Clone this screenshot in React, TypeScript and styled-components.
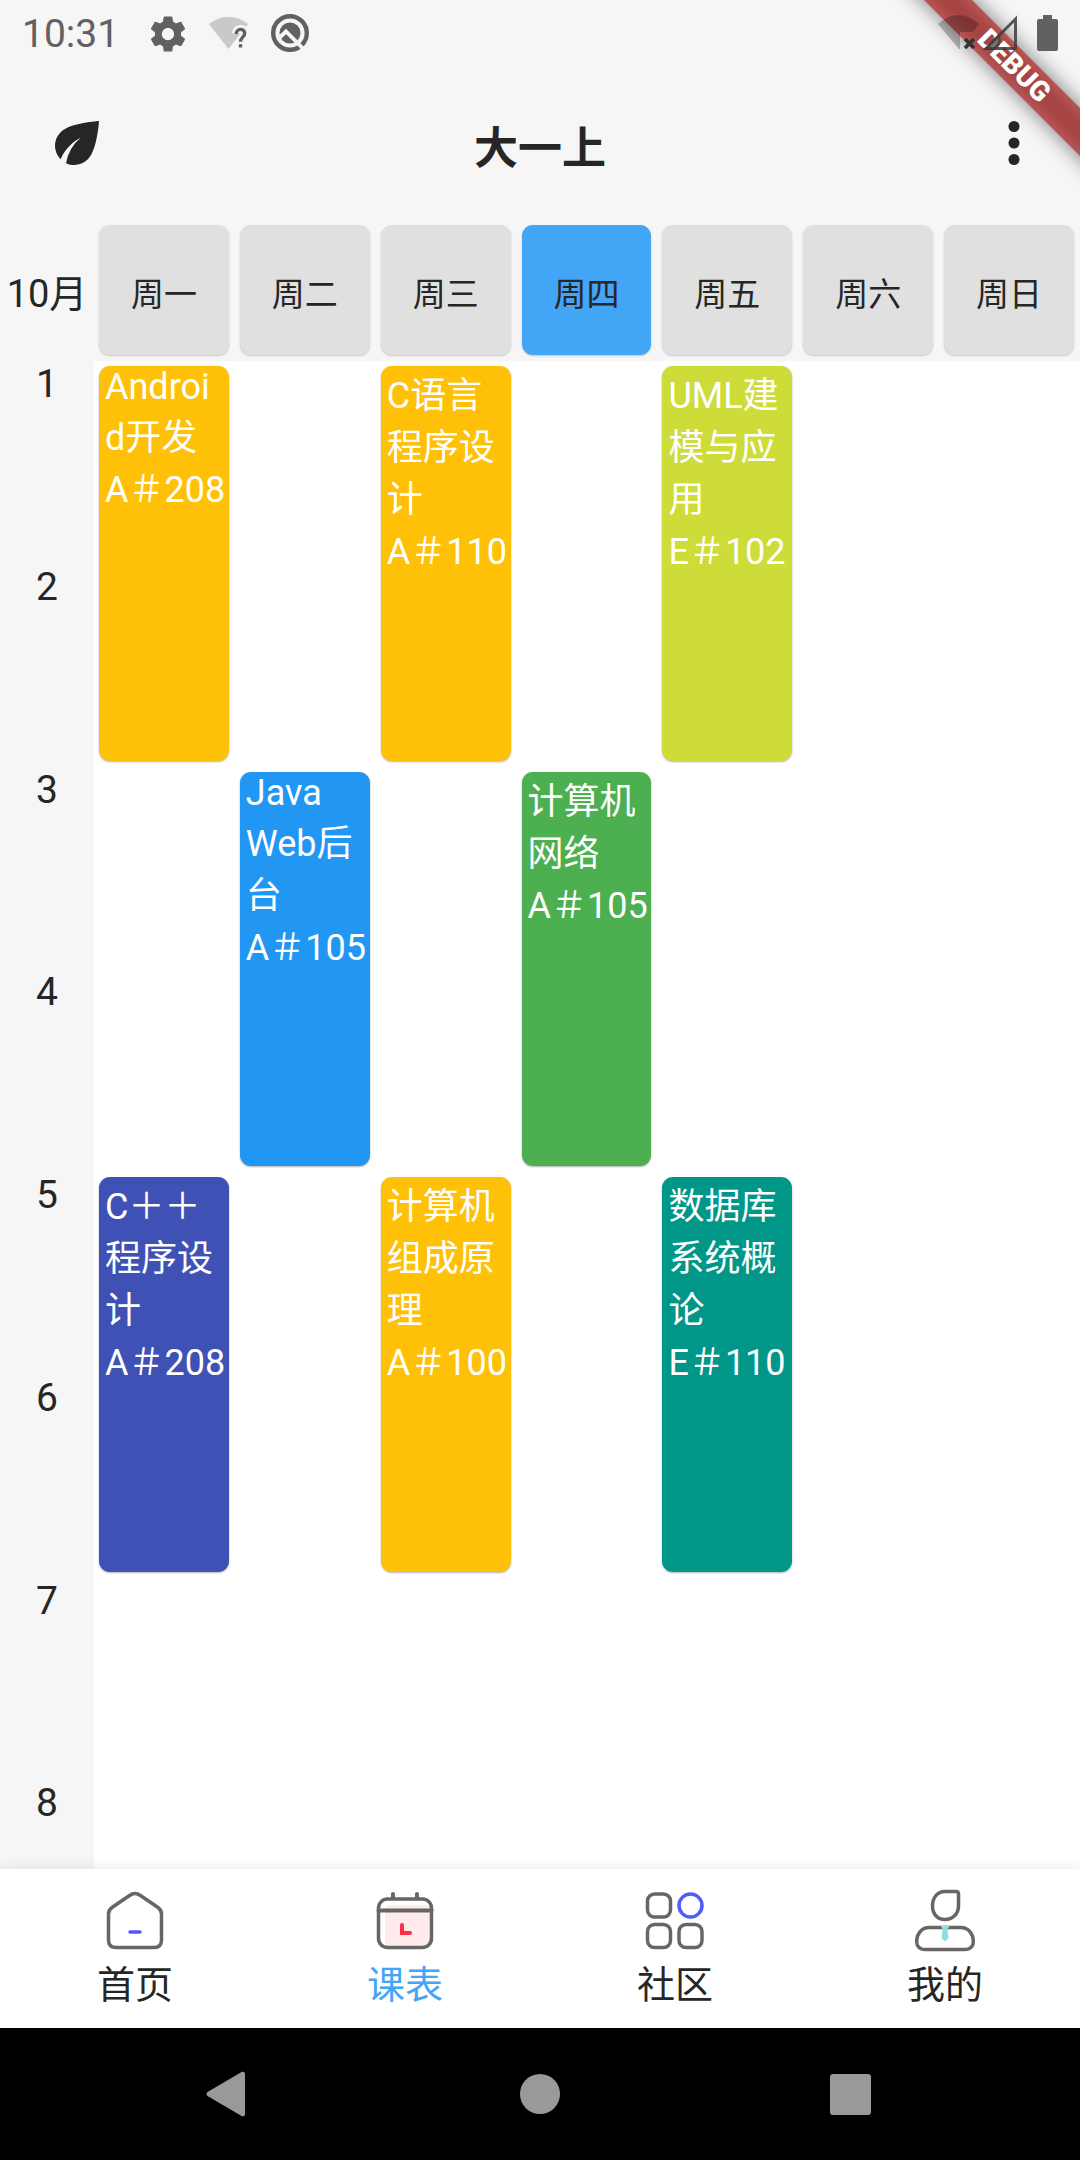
import React from 'react';
import styled, { createGlobalStyle } from 'styled-components';

const GlobalStyle = createGlobalStyle`
  * { box-sizing: border-box; }
  html, body, #root { height: 100%; margin: 0; }
  body {
    background: #f6f6f6;
    color: #262626;
    font-family: Roboto, "Noto Sans CJK SC", sans-serif;
    font-size: 39px;
  }
  button { font: inherit; color: inherit; background: none; border: 0; padding: 0; margin: 0; cursor: pointer; }
  svg { display: block; flex: none; }
`;

const Screen = styled.div`
  position: relative;
  display: flex;
  flex-direction: column;
  height: 100vh;
  overflow: hidden;
`;

const StatusBar = styled.div`
  position: relative;
  z-index: 2;
  display: flex;
  flex: none;
  align-items: center;
  justify-content: space-between;
  height: 66px;
  padding: 2px 20px 0 22px;
  color: #616161;
`;

const StatusGroup = styled.div<{ $gap: number }>`
  display: flex;
  align-items: center;
  gap: ${(p) => p.$gap}px;
`;

const Clock = styled.time`
  margin-right: 9px;
`;

const BannerCorner = styled.div`
  position: absolute;
  top: 0;
  right: 0;
  z-index: 1;
  width: 240px;
  height: 240px;
  overflow: hidden;
  pointer-events: none;
`;

const Banner = styled.div`
  position: absolute;
  top: 49px;
  right: -114px;
  width: 360px;
  height: 34px;
  transform: rotate(45deg);
  &::before {
    content: "";
    position: absolute;
    inset: 0;
    background: rgba(0, 0, 0, 0.5);
    filter: blur(11px);
  }
`;

const BannerText = styled.div`
  position: relative;
  background: rgba(183, 28, 28, 0.63);
  color: #fff;
  font-size: 28px;
  font-weight: 900;
  line-height: 34px;
  text-align: center;
`;

const AppBar = styled.header`
  display: grid;
  flex: none;
  grid-template-columns: 77px 1fr 77px;
  align-items: center;
  justify-items: end;
  height: 154px;
  padding: 0 33px;
`;

const Title = styled.h1`
  justify-self: center;
  margin: 0;
  padding-top: 4px;
  font-size: 44px;
  font-weight: 700;
`;

const WeekHeader = styled.div`
  display: grid;
  flex: none;
  grid-template-columns: 94px repeat(7, minmax(0, 1fr));
  height: 141px;
`;

const Month = styled.div`
  display: flex;
  align-items: center;
  justify-content: center;
  font-size: 38px;
`;

const Day = styled.div<{ $today: boolean }>`
  display: flex;
  align-items: center;
  justify-content: center;
  margin: 5px 6px 6px 5px;
  padding-top: 3px;
  border-radius: 11px;
  background: ${(p) => (p.$today ? '#42a5f5' : '#e0e0e0')};
  box-shadow: 0 1px 2px rgba(0, 0, 0, 0.2);
  font-size: 33px;
`;

const Timetable = styled.main`
  display: grid;
  flex: 1;
  grid-template-columns: 94px 1fr;
  grid-template-rows: 1622px;
  min-height: 0;
  overflow: hidden;
`;

const Periods = styled.ol`
  display: grid;
  grid-template-rows: repeat(8, 1fr);
  margin: 0;
  padding: 0;
  list-style: none;
  text-align: center;
`;

const Lessons = styled.div`
  display: grid;
  grid-template-columns: repeat(7, minmax(0, 1fr));
  grid-template-rows: repeat(8, 1fr);
  background: #fff;
`;

const Lesson = styled.article<{ $day: number; $start: number; $color: string }>`
  grid-column: ${(p) => p.$day};
  grid-row: ${(p) => p.$start} / span 2;
  margin: 5px 6px 6px 5px;
  padding: 0 4px 0 6px;
  border-radius: 11px;
  background: ${(p) => p.$color};
  box-shadow: 0 1px 2px rgba(0, 0, 0, 0.3);
  color: #fff;
  font-size: 36px;
  overflow-wrap: anywhere;
`;

const LessonName = styled.div``;

const Room = styled.div`
  white-space: nowrap;
`;

const TabBar = styled.nav`
  position: relative;
  display: grid;
  flex: none;
  grid-template-columns: repeat(4, 1fr);
  height: 159px;
  background: #fff;
  box-shadow: 0 0 14px rgba(0, 0, 0, 0.1);
`;

const Tab = styled.button<{ $active: boolean }>`
  display: flex;
  flex-direction: column;
  align-items: center;
  padding-top: 19px;
  color: ${(p) => (p.$active ? '#42a5f5' : '#262626')};
  font-size: 38px;
  line-height: 62px;
`;

const SystemBar = styled.div`
  display: flex;
  flex: none;
  align-items: center;
  justify-content: center;
  gap: 244px;
  height: 132px;
  background: #000;
`;

const days = ['周一', '周二', '周三', '周四', '周五', '周六', '周日'];

const lessons = [
  { day: 1, start: 1, name: 'Android开发', room: 'A＃208', color: '#ffc107' },
  { day: 3, start: 1, name: 'C语言程序设计', room: 'A＃110', color: '#ffc107' },
  { day: 5, start: 1, name: 'UML建模与应用', room: 'E＃102', color: '#cddc39' },
  { day: 2, start: 3, name: 'Java Web后台', room: 'A＃105', color: '#2196f3' },
  { day: 4, start: 3, name: '计算机网络', room: 'A＃105', color: '#4caf50' },
  { day: 1, start: 5, name: 'C＋＋程序设计', room: 'A＃208', color: '#3f51b5' },
  { day: 3, start: 5, name: '计算机组成原理', room: 'A＃100', color: '#ffc107' },
  { day: 5, start: 5, name: '数据库系统概论', room: 'E＃110', color: '#009688' },
];

const GearIcon = () => (
  <svg width="42" height="42" viewBox="0 0 24 24" fill="currentColor">
    <path d="M19.43 12.98c.04-.32.07-.64.07-.98s-.03-.66-.07-.98l2.11-1.65c.19-.15.24-.42.12-.64l-2-3.46c-.12-.22-.39-.3-.61-.22l-2.49 1c-.52-.4-1.08-.73-1.69-.98l-.38-2.65C14.46 2.18 14.25 2 14 2h-4c-.25 0-.46.18-.49.42l-.38 2.65c-.61.25-1.17.59-1.69.98l-2.49-1c-.23-.09-.49 0-.61.22l-2 3.46c-.13.22-.07.49.12.64l2.11 1.65c-.04.32-.07.65-.07.98s.03.66.07.98l-2.11 1.65c-.19.15-.24.42-.12.64l2 3.46c.12.22.39.3.61.22l2.49-1c.52.4 1.08.73 1.69.98l.38 2.65c.03.24.24.42.49.42h4c.25 0 .46-.18.49-.42l.38-2.65c.61-.25 1.17-.59 1.69-.98l2.49 1c.23.09.49 0 .61-.22l2-3.46c.12-.22.07-.49-.12-.64l-2.11-1.65zM12 15.5c-1.93 0-3.5-1.57-3.5-3.5s1.57-3.5 3.5-3.5 3.5 1.57 3.5 3.5-1.57 3.5-3.5 3.5z" />
  </svg>
);

const WifiUnknownIcon = () => (
  <svg width="42" height="42" viewBox="0 0 42 42" fill="none">
    <path d="M1 11Q20.500 -3.500 40 11L20.500 36Z" fill="#c9c9c9" />
    <path d="M28 20.500C28 14.500 37 14.500 37 20C37 24.500 32.500 24 32.500 29V34" stroke="#f6f6f6" strokeWidth="8" />
    <path d="M28.300 21C28.300 15 36.700 15 36.700 20.300C36.700 24.300 32.500 24 32.500 28.800M32.500 31.200V34.600" stroke="#616161" strokeWidth="3.400" />
  </svg>
);

const SearchRingIcon = () => (
  <svg width="42" height="42" viewBox="0 0 42 42" fill="none">
    <circle cx="21" cy="20" r="16.800" stroke="#616161" strokeWidth="4.400" />
    <circle cx="21" cy="20" r="10.500" fill="#616161" />
    <path d="M8.500 26.500L17 18.500L37 38.500" stroke="#f6f6f6" strokeWidth="3.800" />
  </svg>
);

const WifiOffIcon = () => (
  <svg width="42" height="42" viewBox="0 0 42 42" fill="none">
    <path d="M1 11Q21 -7 42 11L36 19H23V36H22Z" fill="#000" fillOpacity="0.24" />
    <path d="M28 26L37 35M37 26L28 35" stroke="#363030" strokeWidth="3.600" />
  </svg>
);

const SignalIcon = () => (
  <svg width="51" height="42" viewBox="0 0 51 42" fill="none">
    <path d="M5 35.500L34.500 6V35.500Z" stroke="#3c3c3c" strokeOpacity="0.85" strokeWidth="3" />
    <path d="M2 37L18 21Q23 31 14 37Z" fill="#3c3c3c" fillOpacity="0.7" />
  </svg>
);

const BatteryIcon = () => (
  <svg width="26" height="42" viewBox="0 0 26 42" fill="#616161">
    <path d="M9 2h9v4h4q2 0 2 2v28q0 2-2 2H5q-2 0-2-2V8q0-2 2-2h4z" />
  </svg>
);

const LeafIcon = () => (
  <svg width="66" height="66" viewBox="0 0 24 24" fill="currentColor">
    <path d="M6.050 8.050a7.001 7.001 0 0 0-.02 9.880c1.470-3.400 4.090-6.240 7.360-7.930A15.952 15.952 0 0 0 8 19.320c2.600 1.230 5.800.78 7.950-1.370C19.430 14.470 20 4 20 4S9.530 4.570 6.050 8.050z" />
  </svg>
);

const MoreIcon = () => (
  <svg width="66" height="66" viewBox="0 0 24 24" fill="currentColor">
    <circle cx="12" cy="6" r="2" />
    <circle cx="12" cy="12" r="2" />
    <circle cx="12" cy="18" r="2" />
  </svg>
);

const HomeIcon = () => (
  <svg width="66" height="66" viewBox="0 0 66 66" fill="none" strokeWidth="3.500">
    <path d="M27.500 7.500Q33 3.500 38.500 7.500L56 19.500Q59.500 22 59.500 26V52Q59.500 59.500 52 59.500H14Q6.500 59.500 6.500 52V26Q6.500 22 10 19.500Z" stroke="#666" />
    <path d="M28 44H38" stroke="#4f5bff" strokeLinecap="round" />
  </svg>
);

const CalendarIcon = () => (
  <svg width="66" height="66" viewBox="0 0 66 66" fill="none" strokeWidth="3.500">
    <rect x="13" y="17" width="46" height="42" rx="5" fill="#ffebec" />
    <rect x="6.500" y="11" width="53" height="48.500" rx="9" stroke="#666" />
    <path d="M6.500 22.500H59.500M21 10V6M45 10V6" stroke="#666" strokeWidth="4" strokeLinecap="round" />
    <path d="M30 37V45H38" stroke="#ff3045" strokeWidth="4" strokeLinecap="round" />
  </svg>
);

const CommunityIcon = () => (
  <svg width="66" height="66" viewBox="0 0 66 66" fill="none" stroke="#666" strokeWidth="3.500">
    <rect x="5.500" y="6" width="23" height="23" rx="7" />
    <circle cx="48.500" cy="17.500" r="11.500" stroke="#4f5bff" />
    <rect x="5.500" y="36.500" width="23" height="23" rx="7" />
    <rect x="37" y="36.500" width="23" height="23" rx="7" />
  </svg>
);

const ProfileIcon = () => (
  <svg width="66" height="66" viewBox="0 0 66 66" fill="none" stroke="#666" strokeWidth="3.500">
    <path d="M33 3.500H44Q46.500 3.500 46.500 6V18C46.500 26 40.500 31.500 33 31.500S20.500 26 20.500 18C20.500 10 25 3.500 33 3.500Z" />
    <path d="M17 39.500H49Q57 39.500 60.500 48Q64 61.500 52 61.500H14Q2 61.500 5.500 48Q9 39.500 17 39.500Z" />
    <path d="M28.500 37.500H38L35.500 41L36.500 50L33 53.500L29.500 50L30.500 41Z" fill="#93dce2" stroke="none" />
  </svg>
);

const tabs = [
  { label: '首页', Icon: HomeIcon, active: false },
  { label: '课表', Icon: CalendarIcon, active: true },
  { label: '社区', Icon: CommunityIcon, active: false },
  { label: '我的', Icon: ProfileIcon, active: false },
];

export default function App() {
  return (
    <Screen>
      <GlobalStyle />
      <StatusBar>
        <StatusGroup $gap={19}>
          <Clock>10:31</Clock>
          <GearIcon />
          <WifiUnknownIcon />
          <SearchRingIcon />
        </StatusGroup>
        <StatusGroup $gap={2}>
          <WifiOffIcon />
          <SignalIcon />
          <BatteryIcon />
        </StatusGroup>
      </StatusBar>
      <BannerCorner>
        <Banner>
          <BannerText>DEBUG</BannerText>
        </Banner>
      </BannerCorner>

      <AppBar>
        <button aria-label="主题"><LeafIcon /></button>
        <Title>大一上</Title>
        <button aria-label="更多"><MoreIcon /></button>
      </AppBar>

      <WeekHeader>
        <Month>10月</Month>
        {days.map((day) => (
          <Day key={day} $today={day === '周四'}>{day}</Day>
        ))}
      </WeekHeader>

      <Timetable>
        <Periods>
          {[1, 2, 3, 4, 5, 6, 7, 8].map((n) => (
            <li key={n}>{n}</li>
          ))}
        </Periods>
        <Lessons>
          {lessons.map((l) => (
            <Lesson key={`${l.day}-${l.start}`} $day={l.day} $start={l.start} $color={l.color}>
              <LessonName>{l.name}</LessonName>
              <Room>{l.room}</Room>
            </Lesson>
          ))}
        </Lessons>
      </Timetable>

      <TabBar>
        {tabs.map(({ label, Icon, active }) => (
          <Tab key={label} $active={active}>
            <Icon />
            {label}
          </Tab>
        ))}
      </TabBar>

      <SystemBar>
        <button aria-label="返回">
          <svg width="66" height="66" viewBox="0 0 66 66" fill="#999">
            <path d="M10.500 31L45 10.800Q48 10 48 13V53Q48 56 45 55.200L10.500 35Q8.500 33 10.500 31Z" />
          </svg>
        </button>
        <button aria-label="主屏幕">
          <svg width="66" height="66" viewBox="0 0 66 66" fill="#999"><circle cx="33" cy="33" r="20" /></svg>
        </button>
        <button aria-label="最近任务">
          <svg width="66" height="66" viewBox="0 0 66 66" fill="#999"><rect x="13" y="13" width="41" height="41" rx="3" /></svg>
        </button>
      </SystemBar>
    </Screen>
  );
}
